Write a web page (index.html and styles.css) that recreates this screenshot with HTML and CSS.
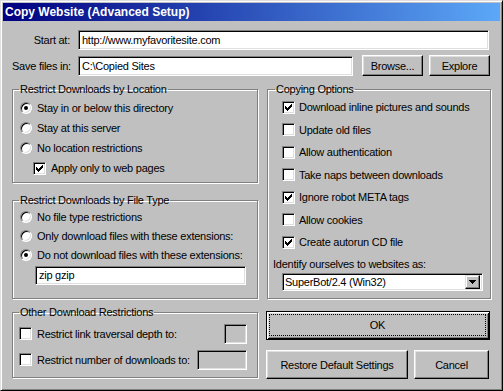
FILE: index.html
```html
<!DOCTYPE html>
<html lang="en">
<head>
    <meta charset="UTF-8">
    <title>Copy Website (Advanced Setup)</title>
    <link rel="stylesheet" href="styles.css">
</head>
<body>
    <div class="window">
        <div class="titlebar">Copy Website (Advanced Setup)</div>
        <div class="content">
            <div class="paths">
                <label class="path-label">Start at:</label>
                <div class="field start-field">http://www.myfavoritesite.com</div>
                <label class="path-label">Save files in:</label>
                <div class="save-row">
                    <div class="field save-field">C:\Copied Sites</div>
                    <div class="btn browse-btn"><span>Browse...</span></div>
                    <div class="btn explore-btn"><span>Explore</span></div>
                </div>
            </div>

            <div class="columns">
                <div class="col">
                    <fieldset class="group loc-group">
                        <legend>Restrict Downloads by Location</legend>
                        <div class="opt"><span class="radio checked"></span>Stay in or below this directory</div>
                        <div class="opt"><span class="radio"></span>Stay at this server</div>
                        <div class="opt"><span class="radio"></span>No location restrictions</div>
                        <div class="opt indent"><span class="check checked"><svg width="7" height="7" viewBox="0 0 7 7"><path d="M0 2h1v3h-1zM1 3h1v3h-1zM2 4h1v3h-1zM3 3h1v3h-1zM4 2h1v3h-1zM5 1h1v3h-1zM6 0h1v3h-1z"/></svg></span>Apply only to web pages</div>
                    </fieldset>

                    <fieldset class="group type-group">
                        <legend>Restrict Downloads by File Type</legend>
                        <div class="opt short"><span class="radio"></span>No file type restrictions</div>
                        <div class="opt short"><span class="radio"></span>Only download files with these extensions:</div>
                        <div class="opt short"><span class="radio checked"></span>Do not download files with these extensions:</div>
                        <div class="field ext-field">zip gzip</div>
                    </fieldset>

                    <fieldset class="group other-group">
                        <legend>Other Download Restrictions</legend>
                        <div class="limit-row">
                            <span class="check"></span>Restrict link traversal depth to:
                            <div class="field disabled depth-field"></div>
                        </div>
                        <div class="limit-row">
                            <span class="check"></span>Restrict number of downloads to:
                            <div class="field disabled count-field"></div>
                        </div>
                    </fieldset>
                </div>

                <div class="col">
                    <fieldset class="group copy-group">
                        <legend>Copying Options</legend>
                        <div class="opt wide"><span class="check checked"><svg width="7" height="7" viewBox="0 0 7 7"><path d="M0 2h1v3h-1zM1 3h1v3h-1zM2 4h1v3h-1zM3 3h1v3h-1zM4 2h1v3h-1zM5 1h1v3h-1zM6 0h1v3h-1z"/></svg></span>Download inline pictures and sounds</div>
                        <div class="opt wide"><span class="check"></span>Update old files</div>
                        <div class="opt wide"><span class="check"></span>Allow authentication</div>
                        <div class="opt wide"><span class="check"></span>Take naps between downloads</div>
                        <div class="opt wide"><span class="check checked"><svg width="7" height="7" viewBox="0 0 7 7"><path d="M0 2h1v3h-1zM1 3h1v3h-1zM2 4h1v3h-1zM3 3h1v3h-1zM4 2h1v3h-1zM5 1h1v3h-1zM6 0h1v3h-1z"/></svg></span>Ignore robot META tags</div>
                        <div class="opt wide"><span class="check"></span>Allow cookies</div>
                        <div class="opt wide"><span class="check checked"><svg width="7" height="7" viewBox="0 0 7 7"><path d="M0 2h1v3h-1zM1 3h1v3h-1zM2 4h1v3h-1zM3 3h1v3h-1zM4 2h1v3h-1zM5 1h1v3h-1zM6 0h1v3h-1z"/></svg></span>Create autorun CD file</div>
                        <div class="agent-label">Identify ourselves to websites as:</div>
                        <div class="field combo">
                            <span class="combo-value">SuperBot/2.4 (Win32)</span>
                            <span class="combo-btn"><svg width="7" height="4" viewBox="0 0 7 4"><path d="M0 0h7v1h-1v1h-1v1h-1v1h-1v-1h-1v-1h-1v-1h-1z"/></svg></span>
                        </div>
                    </fieldset>

                    <div class="btn default ok-btn"><span>OK</span></div>
                    <div class="bottom-buttons">
                        <div class="btn restore-btn"><span>Restore Default Settings</span></div>
                        <div class="btn cancel-btn"><span>Cancel</span></div>
                    </div>
                </div>
            </div>
        </div>
    </div>
</body>
</html>
```

FILE: styles.css
```css
html, body {
    margin: 0;
    padding: 0;
    background: #c0c0c0;
}
body {
    font-family: "Liberation Sans", Arial, sans-serif;
    font-size: 11px;
    letter-spacing: -0.25px;
    color: #000;
}
.window {
    box-sizing: border-box;
    width: 503px;
    height: 391px;
    border: 1px solid;
    border-color: #dfdfdf #000 #000 #dfdfdf;
    box-shadow: inset 1px 1px #fff, inset -1px -1px #808080;
    padding: 2px;
    background: #c0c0c0;
}
.titlebar {
    height: 18px;
    line-height: 18px;
    padding-left: 2px;
    color: #fff;
    font-weight: bold;
    font-size: 12px;
    letter-spacing: 0;
    background: linear-gradient(to right, #000080, #5ca8f8);
    white-space: nowrap;
}
.content {
    padding: 9px 9px 0 9px;
}

/* path rows */
.paths {
    display: grid;
    grid-template-columns: 66px 1fr;
    row-gap: 5px;
    align-items: center;
}
.path-label {
    text-align: right;
    padding-right: 8px;
    white-space: nowrap;
}
.field {
    box-sizing: border-box;
    height: 20px;
    line-height: 18px;
    padding: 0 3px;
    background: #fff;
    border: 1px solid;
    border-color: #808080 #fff #fff #808080;
    box-shadow: inset 1px 1px #000, inset -1px -1px #dfdfdf;
    white-space: nowrap;
    overflow: hidden;
}
.field.disabled {
    background: #c0c0c0;
}
.start-field {
    margin-right: 2px;
}
.save-row {
    display: flex;
    align-items: center;
}
.save-field {
    width: 275px;
    margin-right: 9px;
}
.btn {
    box-sizing: border-box;
    display: flex;
    background: #c0c0c0;
    border: 1px solid;
    border-color: #fff #000 #000 #fff;
    box-shadow: inset -1px -1px #808080, inset 1px 1px #dfdfdf;
}
.btn span {
    flex: 1;
    display: flex;
    align-items: center;
    justify-content: center;
    margin: 2px;
    border: 1px solid transparent;
    white-space: nowrap;
}
.browse-btn, .explore-btn {
    width: 61px;
    height: 21px;
}
.explore-btn {
    margin-left: 6px;
}

/* columns */
.columns {
    display: grid;
    grid-template-columns: 246px 224px;
    column-gap: 9px;
    margin-top: 7px;
}
.col {
    display: flex;
    flex-direction: column;
}
.group {
    box-sizing: border-box;
    margin: 0;
    min-width: 0;
    padding: 2px 8px 4px 6px;
    border: 1px solid #808080;
    box-shadow: inset 1px 1px #fff, 1px 1px #fff;
}
.group legend {
    padding: 0 1px;
    line-height: 13px;
}
.opt {
    display: flex;
    align-items: center;
    height: 20px;
    white-space: nowrap;
}
.opt.short {
    height: 19px;
}
.opt.wide {
    height: 22.5px;
    padding-left: 9px;
}
.opt.indent {
    padding-left: 14px;
}
.radio {
    box-sizing: border-box;
    width: 12px;
    height: 12px;
    margin: 0 5px 0 1px;
    border-radius: 50%;
    background: #fff;
    border: 1px solid;
    border-color: #808080 #fff #fff #808080;
    box-shadow: inset 1px 1px #000, inset -1px -1px #dfdfdf;
    display: flex;
    align-items: center;
    justify-content: center;
}
.radio.checked::after {
    content: "";
    width: 4px;
    height: 4px;
    border-radius: 50%;
    background: #000;
}
.check {
    box-sizing: border-box;
    flex: none;
    width: 13px;
    height: 13px;
    margin-right: 5px;
    background: #fff;
    border: 1px solid;
    border-color: #808080 #fff #fff #808080;
    box-shadow: inset 1px 1px #000, inset -1px -1px #dfdfdf;
    display: flex;
    align-items: center;
    justify-content: center;
}
.check svg {
    shape-rendering: crispEdges;
}
.opt.wide .check {
    margin-right: 4px;
}

.type-group {
    margin-top: 11px;
    padding-top: 0;
    padding-bottom: 13px;
}
.ext-field {
    width: 211px;
    height: 19px;
    line-height: 17px;
    margin: 2px 0 0 16px;
}

.other-group {
    margin-top: 7px;
    padding-top: 4px;
    padding-bottom: 7px;
}
.limit-row {
    display: flex;
    align-items: center;
    height: 21px;
    white-space: nowrap;
}
.limit-row + .limit-row {
    margin-top: 5px;
}
.depth-field {
    width: 23px;
    margin-left: auto;
    margin-right: 2px;
}
.count-field {
    width: 50px;
    margin-left: auto;
    margin-right: 2px;
}

/* right column */
.copy-group {
    height: 216px;
    padding: 0 8px 0 5px;
}
.copy-group legend {
    margin-left: 2px;
}
.agent-label {
    margin-top: 3px;
    height: 15px;
    line-height: 15px;
    white-space: nowrap;
}
.combo {
    display: flex;
    align-items: center;
    width: 201px;
    height: 18px;
    margin: 1px 0 0 9px;
    padding: 0 2px 0 2px;
}
.combo-value {
    flex: 1;
}
.combo-btn {
    box-sizing: border-box;
    width: 15px;
    height: 14px;
    display: flex;
    align-items: center;
    justify-content: center;
    background: #c0c0c0;
    border: 1px solid;
    border-color: #dfdfdf #000 #000 #dfdfdf;
    box-shadow: inset -1px -1px #808080, inset 1px 1px #fff;
}
.combo-btn svg {
    shape-rendering: crispEdges;
}

.ok-btn {
    width: 224px;
    height: 29px;
    margin: 12px 0 0 -1px;
}
.btn.default {
    border: 1px solid #000;
    box-shadow: inset 1px 1px #fff, inset -1px -1px #000, inset 2px 2px #dfdfdf, inset -2px -2px #808080;
}
.btn.default span {
    margin: 2px 3px 3px 2px;
    border: 1px dotted #000;
}
.bottom-buttons {
    display: flex;
    margin: 10px 0 0 -1px;
}
.restore-btn {
    width: 142px;
    height: 29px;
}
.cancel-btn {
    width: 75px;
    height: 29px;
    margin-left: 6px;
}
```
